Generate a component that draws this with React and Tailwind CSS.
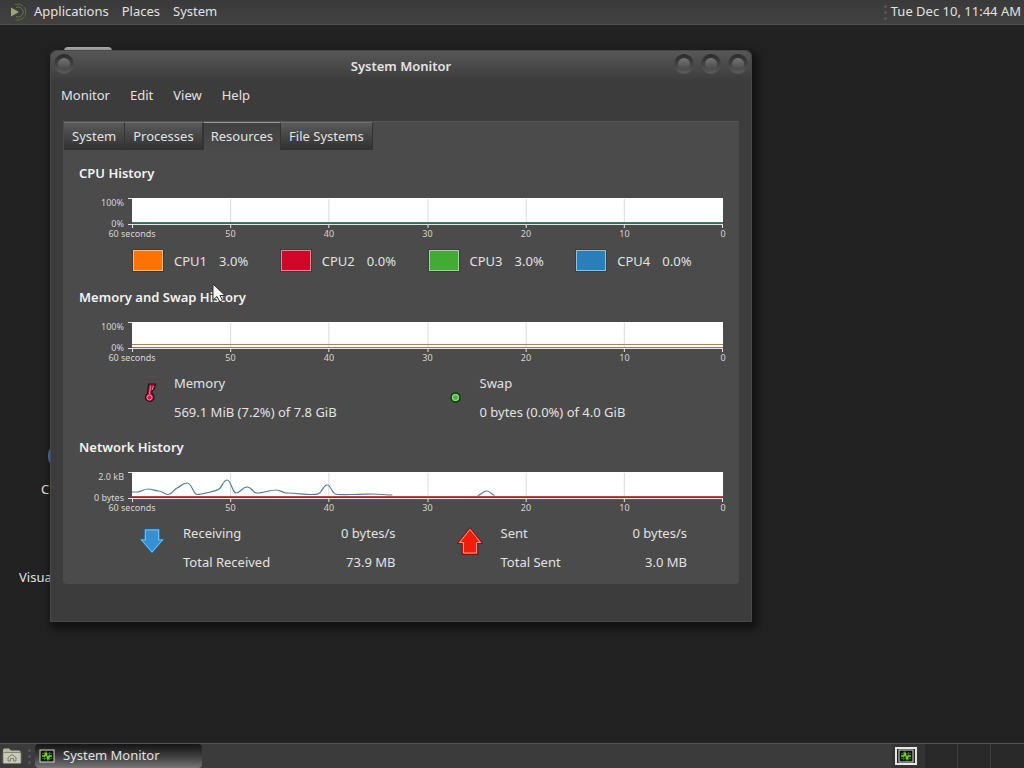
import React from 'react';

const MENU = ['Monitor', 'Edit', 'View', 'Help'];
const TABS = ['System', 'Processes', 'Resources', 'File Systems'];

const CPUS = [
  { name: 'CPU1', value: '3.0%', color: 'bg-[#ff7303]' },
  { name: 'CPU2', value: '0.0%', color: 'bg-[#cf0829]' },
  { name: 'CPU3', value: '3.0%', color: 'bg-[#43ab35]' },
  { name: 'CPU4', value: '0.0%', color: 'bg-[#2980b9]' },
];

const RECEIVED_PATH =
  'M0 20 H5 C9 20 12 17 16 17 S24 19 27 19 S32 22.5 36 22.5 S41 18 45 16 S50 11 55 11 S61 22.5 65 22.5 S74 21 78 20 S84 19 87 17 S91 8 95 8 S100 21 104 21 S110 15 115 15 S120 21 125 21 S139 18 144 18 S150 21 154 21 C165 21 170 22.5 178 22.5 S187 22 189 19 S192 13 195 13 S200 21 203 22 S210 22.5 220 22.5 S235 22 240 22 S255 23 260 23 M345 23.5 C349 23 350 19 354 19 S359 23 362 23.5';

const MateLogo = () => (
  <svg viewBox="0 0 20 18" className="w-5 h-[18px]" fill="none" aria-hidden="true">
    <path d="M3 4.5 L11 9 L3 13.5 Z" fill="#9aa86f" />
    <path d="M7 1.5 A8 8 0 1 1 7 16.5" stroke="#5f7338" strokeWidth="1" strokeDasharray="9 1" />
    <path d="M8 4.5 A5 5 0 1 1 8 13.5" stroke="#6a7d42" strokeWidth="1" />
  </svg>
);

const MonitorIcon = () => (
  <svg viewBox="0 0 16 14" className="w-4 h-3.5 shrink-0" aria-hidden="true">
    <rect x="1" y="1" width="14" height="12" fill="#0b1a05" stroke="#d6d6d6" />
    <path d="M3 4.5 H13 M3 9.5 H13 M5.5 3 V11 M10.5 3 V11" stroke="#2f6d12" />
    <path d="M3 7 H6 L7 4 L9 10 L10 7 H13" stroke="#7fd32f" strokeWidth="1.4" fill="none" />
  </svg>
);

const FolderIcon = () => (
  <svg viewBox="0 0 20 18" className="w-5 h-[18px]" aria-hidden="true">
    <path d="M1 3 Q1 1.5 2.5 1.5 H7 L9 3.5 H17 Q18.5 3.5 18.5 5 V7 H1 Z" fill="#b9b9a4" />
    <rect x="1" y="5.5" width="18" height="11" rx="1" fill="#c9cab6" stroke="#77786a" strokeWidth="0.8" />
    <path d="M6 14 V10.5 L10 7.5 L14 10.5 V14 H11.5 V11.5 H8.5 V14 Z" fill="none" stroke="#7b7c6c" />
  </svg>
);

const RoundButton = ({ label }) => (
  <button
    aria-label={label}
    className="size-5 rounded-full bg-linear-to-b from-[#2a2a2a] to-[#5c5c5c] flex items-center justify-center"
  >
    <span className="size-3 rounded-full bg-linear-to-b from-[#757575] to-[#484848]" />
  </button>
);

const Grip = () => (
  <span className="flex flex-col gap-[3px]">
    <span className="size-[3px] rounded-full bg-[#565656]" />
    <span className="size-[3px] rounded-full bg-[#565656]" />
    <span className="size-[3px] rounded-full bg-[#565656]" />
  </span>
);

const Chart = ({ label, top, bottom, children }) => (
  <div className="flex text-[9px] leading-[10px] text-[#d5d5d5]">
    <div className="w-[45px] shrink-0 flex flex-col justify-between text-right h-[31px]">
      <span>{top}</span>
      <span>{bottom}</span>
    </div>
    <div className="ml-1 flex-1">
      <svg
        viewBox="0 0 594 30"
        preserveAspectRatio="none"
        className="block w-full h-[30px]"
        fill="none"
        role="img"
        aria-label={label}
      >
        <rect x="4" y="0" width="590" height="25" fill="#fff" />
        <path d="M102.5 1 V25 M200.5 1 V25 M299.5 1 V25 M397.5 1 V25 M495.5 1 V25" stroke="#dcdcdc" />
        <g transform="translate(4 0)">{children}</g>
        <path d="M0 0.5 H4 M0 26.5 H594" stroke="#e4e4e4" />
        <path
          d="M4.5 26 V30 M102.5 26 V30 M200.5 26 V30 M299.5 26 V30 M397.5 26 V30 M495.5 26 V30 M593.5 26 V30"
          stroke="#e4e4e4"
        />
      </svg>
      <div className="ml-1 mt-px flex justify-between h-3">
        {['60 seconds', '50', '40', '30', '20', '10', '0'].map((tick) => (
          <span key={tick} className="w-0 flex justify-center whitespace-nowrap">
            {tick}
          </span>
        ))}
      </div>
    </div>
  </div>
);

const Section = ({ title, children }) => (
  <section>
    <h2 className="font-semibold text-[#f2f2f2] leading-5 mb-[15px]">{title}</h2>
    {children}
  </section>
);

const Usage = ({ name, value, icon }) => (
  <div className="flex">
    <div className="w-[42px] shrink-0 pl-2 pt-2">{icon}</div>
    <dl className="leading-5">
      <dt>{name}</dt>
      <dd className="mt-[9px]">{value}</dd>
    </dl>
  </div>
);

const Traffic = ({ rows, icon }) => (
  <div className="flex">
    <div className="w-[51px] shrink-0 pl-[7px] pt-1">{icon}</div>
    <dl className="flex-1 flex flex-col gap-[9px] leading-5">
      {rows.map(([name, value]) => (
        <div key={name} className="flex justify-between">
          <dt>{name}</dt>
          <dd>{value}</dd>
        </div>
      ))}
    </dl>
  </div>
);

const ResourcesTab = () => (
  <div className="px-4 pt-[13px] pb-3 flex flex-col gap-[15px]">
    <Section title="CPU History">
      <Chart label="CPU history" top="100%" bottom="0%">
        <path d="M0 24.5 H590" stroke="#3f7f70" />
        <path d="M0 25.5 H590" stroke="#4b5f5a" />
      </Chart>
      <ul className="pl-[53px] mt-2 grid grid-cols-4">
        {CPUS.map((cpu) => (
          <li key={cpu.name} className="flex items-center leading-5">
            <button
              aria-label={`${cpu.name} color`}
              className={`w-8 h-[23px] mr-[10px] border border-[#3c3c3c] ${cpu.color}`}
            >
              <span className="block size-full border border-white/50" />
            </button>
            <span className="mr-3">{cpu.name}</span>
            <span>{cpu.value}</span>
          </li>
        ))}
      </ul>
    </Section>

    <Section title="Memory and Swap History">
      <Chart label="Memory and swap history" top="100%" bottom="0%">
        <path d="M0 22.5 H590" stroke="#a58560" />
        <path d="M0 25.5 H590" stroke="#8d7a62" />
      </Chart>
      <div className="pl-[53px] mt-2 grid grid-cols-2 gap-5">
        <Usage
          name="Memory"
          value="569.1 MiB (7.2%) of 7.8 GiB"
          icon={
            <svg viewBox="0 0 20 24" className="w-5 h-6" aria-hidden="true">
              <path
                d="M8.5 3 H15.5 L14.5 7.5 L12 10 V12.5 A4.3 4.3 0 1 1 7.5 12.5 Z"
                fill="#b3123f"
                stroke="#2c1018"
                strokeWidth="1.2"
              />
              <path d="M9.5 13 L10.5 5 M12 9 L13.5 5" stroke="#e08aa3" />
              <circle cx="9.5" cy="16.5" r="2.5" fill="#dc1449" stroke="#eda0b5" />
            </svg>
          }
        />
        <Usage
          name="Swap"
          value="0 bytes (0.0%) of 4.0 GiB"
          icon={
            <svg viewBox="0 0 20 24" className="w-5 h-6" aria-hidden="true">
              <circle cx="9.5" cy="16.5" r="4.5" fill="#57c34b" stroke="#123b12" strokeWidth="1.5" />
              <circle cx="9.5" cy="16.5" r="3" fill="#4db342" stroke="#9be091" />
            </svg>
          }
        />
      </div>
    </Section>

    <Section title="Network History">
      <Chart label="Network history" top="2.0 kB" bottom="0 bytes">
        <path d={RECEIVED_PATH} stroke="#4d7ea0" strokeWidth="1.2" />
        <path d="M0 24.5 H590" stroke="#b04a40" />
        <path d="M0 27.5 H590" stroke="#a03a32" />
      </Chart>
      <div className="pl-[53px] pr-9 mt-2 grid grid-cols-[263fr_237fr] gap-[54px]">
        <Traffic
          rows={[
            ['Receiving', '0 bytes/s'],
            ['Total Received', '73.9 MB'],
          ]}
          icon={
            <svg viewBox="0 0 26 28" className="w-[26px] h-7" aria-hidden="true">
              <path
                d="M5 1.5 H21 V11.5 H26 L13 27 L0 11.5 H5 Z"
                fill="#3591d1"
                stroke="#2b5475"
                strokeWidth="1"
              />
              <path d="M6.5 3 H19.5 V13 H23.5 L13 25 L2.5 13 H6.5 Z" fill="none" stroke="#7fb9e0" />
            </svg>
          }
        />
        <Traffic
          rows={[
            ['Sent', '0 bytes/s'],
            ['Total Sent', '3.0 MB'],
          ]}
          icon={
            <svg viewBox="0 0 26 28" className="w-[26px] h-7" aria-hidden="true">
              <path
                d="M13 0.5 L26 16.5 H21 V27.5 H5 V16.5 H0 Z"
                fill="#f21d08"
                stroke="#7c1410"
                strokeWidth="1"
              />
              <path d="M13 2.5 L23.5 15.5 H19.5 V26 H6.5 V15.5 H2.5 Z" fill="none" stroke="#ff9a90" />
            </svg>
          }
        />
      </div>
    </Section>
  </div>
);

const MonitorWindow = () => (
  <div className="absolute left-[50px] top-[25px] w-[702px] max-w-full pb-[37px] rounded-t-md bg-[#3c3c3c] border border-[#484848] shadow-[3px_4px_8px_3px_rgba(0,0,0,0.5)]">
    <header className="flex items-start h-[30px] px-[3px] pt-[3px] rounded-t-md bg-linear-to-b from-[#575757] to-[#3c3c3c]">
      <div className="flex-1">
        <RoundButton label="Window menu" />
      </div>
      <h1 className="font-semibold text-[#e4e4e4] leading-6">System Monitor</h1>
      <div className="flex-1 flex justify-end gap-[7px]">
        <RoundButton label="Minimize" />
        <RoundButton label="Maximize" />
        <RoundButton label="Close" />
      </div>
    </header>

    <nav className="flex h-10 pt-0.5 leading-6">
      {MENU.map((item) => (
        <button key={item} className="px-[10px] h-6">
          {item}
        </button>
      ))}
    </nav>

    <main className="mx-3 bg-[#4b4b4b] border-t border-[#555] rounded-b-sm">
      <div role="tablist" className="flex h-7 pl-px">
        {TABS.map((tab) => (
          <button
            key={tab}
            role="tab"
            aria-selected={tab === 'Resources'}
            className={
              tab === 'Resources'
                ? 'px-[7px] border-t border-x border-t-[#999] border-x-[#333] bg-linear-to-b from-[#404040] to-[#4b4b4b]'
                : 'px-2 border-r border-r-[#333] border-t border-t-[#707070] bg-linear-to-b from-[#5a5a5a] to-[#303030]'
            }
          >
            {tab}
          </button>
        ))}
      </div>
      <ResourcesTab />
    </main>
  </div>
);

const Cursor = () => (
  <svg viewBox="0 0 14 20" className="absolute left-[212px] top-[258px] w-3.5 h-5" aria-hidden="true">
    <path d="M1 1 V17 L5 13.5 L8 19 L10.5 17.5 L8 12.5 H13 Z" fill="#f4f4f4" stroke="#333" />
  </svg>
);

function App() {
  return (
    <div className="min-h-screen flex flex-col overflow-hidden bg-[#222] text-[13px] text-[#e2e2e2] font-['Noto_Sans',sans-serif]">
      <header className="h-[25px] shrink-0 flex items-center pl-2 pr-[3px] bg-linear-to-b from-[#3a3a3a] to-[#414141] border-b border-[#515151]">
        <nav className="flex items-center">
          <button className="flex items-center gap-[6px] mr-[13px]">
            <MateLogo />
            Applications
          </button>
          <button className="mr-[13px]">Places</button>
          <button>System</button>
        </nav>
        <div className="ml-auto flex items-center gap-1">
          <Grip />
          <time>Tue Dec 10, 11:44 AM</time>
        </div>
      </header>

      <div className="relative flex-1 min-h-[600px]">
        <div className="absolute left-16 top-[22px] w-12 h-5 rounded-t-sm bg-[#b8b8b8]" />
        <div className="absolute left-12 top-[415px] size-8 rounded-full bg-[#4a7cc8]" />
        <span className="absolute left-[41px] top-[455px]">C</span>
        <span className="absolute left-[19px] top-[543px]">Visua</span>
        <MonitorWindow />
        <Cursor />
      </div>

      <footer className="h-[25px] shrink-0 flex items-stretch border-t border-[#555] bg-[#3b3b3b]">
        <button aria-label="Show desktop" className="w-6 flex items-center justify-center">
          <FolderIcon />
        </button>
        <div className="w-[11px] flex items-center justify-center">
          <Grip />
        </div>
        <button className="w-[167px] flex items-center gap-2 pl-1 rounded-sm bg-linear-to-b from-[#151515] via-[#3c3c3c] to-[#777]">
          <MonitorIcon />
          System Monitor
        </button>
        <div className="ml-auto flex bg-[#292929]">
          <button aria-label="Workspace 1" className="w-[33px] pl-[3px] flex items-center bg-[#333]">
            <span className="w-[22px] h-[18px] border-2 border-[#e6e6e6] bg-[#222] flex items-center justify-center">
              <MonitorIcon />
            </span>
          </button>
          <button aria-label="Workspace 2" className="w-[33px] border-r border-[#3d3d3d]" />
          <button aria-label="Workspace 3" className="w-[33px] border-r border-[#3d3d3d]" />
          <button aria-label="Workspace 4" className="w-[33px]" />
        </div>
      </footer>
    </div>
  );
}

export default App;
